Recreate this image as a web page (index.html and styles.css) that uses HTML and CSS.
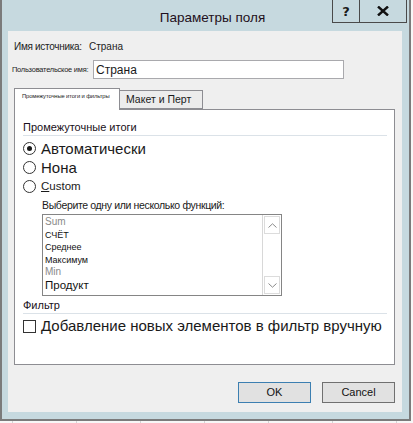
FILE: index.html
```html
<!DOCTYPE html>
<html lang="ru">
<head>
<meta charset="utf-8">
<title>Параметры поля</title>
<link rel="stylesheet" href="styles.css">
</head>
<body>
<div class="dialog">
  <div class="titlebar">
    <div class="title">Параметры поля</div>
    <div class="tbtns">
      <div class="tb help">?</div>
      <div class="tb close">
        <svg width="12" height="10" viewBox="0 0 12 10"><path d="M1 0.5 L11 9.5 M11 0.5 L1 9.5" stroke="#111" stroke-width="2.4" fill="none"/></svg>
      </div>
    </div>
  </div>
  <div class="panel">
    <div class="src"><span class="lbl">Имя источника:</span><span class="val">Страна</span></div>
    <div class="custom">
      <span class="tiny">Пользовательское имя:</span>
      <div class="input">Страна</div>
    </div>
    <div class="tabs">
      <div class="tab active"><span class="tiny2">Промежуточные итоги и фильтры</span></div>
      <div class="tab inactive">Макет и Перт</div>
    </div>
    <div class="tabpanel">
      <div class="section">Промежуточные итоги</div>
      <div class="radio big"><span class="circle on"></span><span>Автоматически</span></div>
      <div class="radio mid"><span class="circle"></span><span>Нона</span></div>
      <div class="radio small"><span class="circle"></span><span><u>C</u>ustom</span></div>
      <div class="fnlabel">Выберите одну или несколько функций:</div>
      <div class="listbox">
        <div class="items">
          <div class="item gray">Sum</div>
          <div class="item">СЧЁТ</div>
          <div class="item">Среднее</div>
          <div class="item">Максимум</div>
          <div class="item gray">Min</div>
          <div class="item large">Продукт</div>
        </div>
        <div class="scroll">
          <div class="arrow"><svg width="9" height="5" viewBox="0 0 9 5"><path d="M0.5 4.5 L4.5 0.8 L8.5 4.5" stroke="#8a8a8a" fill="none"/></svg></div>
          <div class="track"></div>
          <div class="arrow"><svg width="9" height="5" viewBox="0 0 9 5"><path d="M0.5 0.5 L4.5 4.2 L8.5 0.5" stroke="#8a8a8a" fill="none"/></svg></div>
        </div>
      </div>
      <div class="section filter">Фильтр</div>
      <div class="check"><span class="box"></span><span>Добавление новых элементов в фильтр вручную</span></div>
    </div>
    <div class="buttons">
      <div class="btn ok">OK</div>
      <div class="btn cancel">Cancel</div>
    </div>
  </div>
</div>
</body>
</html>
```

FILE: styles.css
```css
html, body {
  margin: 0;
  padding: 0;
}
body {
  width: 413px;
  height: 423px;
  overflow: hidden;
  background-color: #f7f7f7;
  background-image:
    linear-gradient(to right, transparent 12px, #d4d4d4 12px, #d4d4d4 13px, transparent 13px);
  background-size: 64px 100%;
  font-family: "Liberation Sans", Arial, sans-serif;
  color: #1a1a1a;
  white-space: nowrap;
}
.dialog {
  width: 407px;
  height: 419px;
  border: 2px solid #7b7b7b;
  border-top: none;
  background: #c6d9df;
  display: flex;
  flex-direction: column;
}
.titlebar {
  height: 31px;
  flex: none;
  display: flex;
  position: relative;
}
.title {
  flex: 1;
  text-align: center;
  font-size: 13.5px;
  line-height: 16px;
  padding-top: 10px;
  padding-left: 14px;
  color: #1f1020;
}
.tbtns {
  position: absolute;
  right: 2px;
  top: 0;
  display: flex;
  height: 22px;
  border: 1.5px solid #4a4a4a;
  border-top: none;
}
.tb {
  display: flex;
  align-items: center;
  justify-content: center;
  font-family: "DejaVu Sans", sans-serif;
  font-weight: bold;
  font-size: 13px;
}
.help {
  width: 26px;
  border-right: 1.5px solid #4a4a4a;
}
.close {
  width: 46px;
}
.panel {
  margin: 0 7px 0 6px;
  height: 381px;
  flex: none;
  background: #efefef;
  display: flex;
  flex-direction: column;
  box-sizing: border-box;
}
.src {
  display: flex;
  font-size: 10px;
  line-height: 14px;
  padding: 9px 0 0 6px;
  color: #222;
}
.src .lbl {
  flex: none;
  width: 75px;
  letter-spacing: -0.3px;
}
.custom {
  display: flex;
  align-items: center;
  margin-top: 6px;
  padding-left: 4px;
  height: 19px;
}
.tiny {
  flex: none;
  font-size: 7.4px;
  width: 81px;
  letter-spacing: -0.2px;
  color: #222;
}
.input {
  width: 247px;
  height: 17px;
  border: 1px solid #a9a9ad;
  background: #fff;
  font-size: 12px;
  line-height: 18px;
  padding-left: 2px;
  box-sizing: content-box;
}
.tabs {
  display: flex;
  align-items: flex-end;
  margin: 9px 0 0 6px;
  height: 21px;
  position: relative;
  z-index: 1;
}
.tab {
  box-sizing: border-box;
  border: 1px solid #8d8d92;
  border-bottom: none;
}
.tab.active {
  width: 106px;
  height: 22px;
  background: #fff;
  margin-bottom: -1px;
  padding: 4px 0 0 7px;
}
.tiny2 {
  font-size: 5.8px;
  letter-spacing: -0.1px;
  display: block;
}
.tab.inactive {
  width: 83px;
  height: 19px;
  border-left: none;
  background: #ececec;
  font-size: 10.5px;
  line-height: 17px;
  padding-left: 6px;
  border-bottom: 1px solid #8d8d92;
}
.tabpanel {
  margin-left: 6px;
  width: 381px;
  height: 256px;
  flex: none;
  box-sizing: border-box;
  border: 1px solid #8d8d92;
  background: #fff;
  padding: 10px 7px 0 8px;
  display: flex;
  flex-direction: column;
}
.section {
  font-size: 11px;
  line-height: 14px;
  padding-bottom: 1px;
  border-bottom: 1px solid #dbe2e8;
  color: #1a1020;
}
.radio {
  display: flex;
  align-items: center;
  gap: 5px;
}
.circle {
  width: 11px;
  height: 11px;
  border: 1px solid #333;
  border-radius: 50%;
  flex: none;
  position: relative;
  background: #fff;
}
.circle.on::after {
  content: "";
  position: absolute;
  left: 3px;
  top: 3px;
  width: 5px;
  height: 5px;
  border-radius: 50%;
  background: #1a1a1a;
}
.radio.big {
  margin-top: 3px;
  font-size: 15px;
  line-height: 19px;
}
.radio.mid {
  font-size: 15px;
  line-height: 19px;
}
.radio.small {
  font-size: 11.5px;
  line-height: 18px;
}
.fnlabel {
  margin: 3px 0 0 19px;
  font-size: 10.5px;
  line-height: 14px;
  letter-spacing: -0.35px;
}
.listbox {
  margin: 2px 0 0 19px;
  width: 240px;
  height: 82px;
  flex: none;
  box-sizing: border-box;
  border: 1px solid #858585;
  display: flex;
}
.items {
  flex: 1;
  padding: 1px 0 0 2px;
}
.item {
  font-size: 9px;
  line-height: 12.5px;
  color: #111;
}
.item.gray { color: #8a8a8a; font-size: 10px; }
.item.large { font-size: 11.5px; line-height: 13px; }
.scroll {
  width: 18px;
  border-left: 1px solid #d8d8d8;
  display: flex;
  flex-direction: column;
  background: #fff;
}
.arrow {
  height: 16px;
  display: flex;
  align-items: center;
  justify-content: center;
  border: 1px solid #dcdcdc;
  margin: 1px;
}
.track { flex: 1; }
.section.filter {
  margin-top: 2px;
}
.check {
  display: flex;
  align-items: center;
  gap: 5px;
  margin-top: 3px;
  font-size: 15px;
  line-height: 18px;
}
.box {
  width: 11px;
  height: 11px;
  border: 1px solid #333;
  background: #fff;
  flex: none;
}
.buttons {
  display: flex;
  justify-content: flex-end;
  gap: 11px;
  padding: 17px 7px 0 0;
}
.btn {
  width: 73px;
  height: 21px;
  box-sizing: border-box;
  background: #e1e1e1;
  border: 1px solid #707070;
  font-size: 11px;
  line-height: 19px;
  text-align: center;
  color: #111;
}
.btn.ok {
  border-color: #3c7fb1;
}
```
